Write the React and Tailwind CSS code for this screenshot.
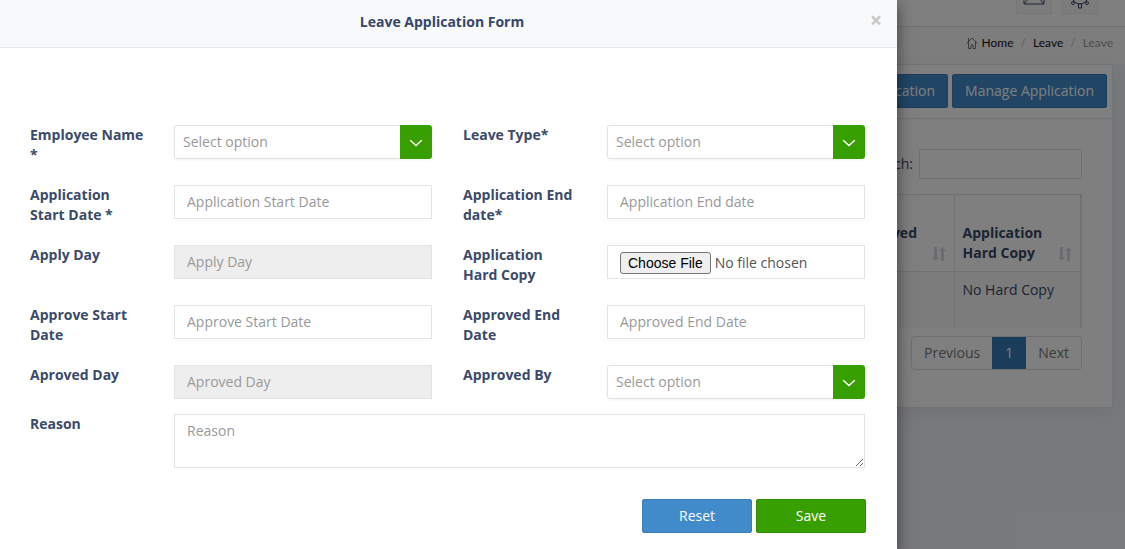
import { useState } from "react";

const fieldBox =
  "block w-full h-[34px] border border-[#e1e3e4] px-3 pb-[2px] text-[#555] outline-none placeholder:text-[#999] placeholder:opacity-100";

function Field({ id, label, children }) {
  return (
    <div className="grid grid-cols-[144px_1fr] items-start">
      <label htmlFor={id} className="pr-7 font-bold text-[#3b4a69]">
        {label}
      </label>
      {children}
    </div>
  );
}

function TextField({ id, label, placeholder, disabled }) {
  return (
    <Field id={id} label={label}>
      <input
        id={id}
        type="text"
        placeholder={placeholder}
        disabled={disabled}
        className={`${fieldBox} ${disabled ? "bg-[#eee]" : "bg-white"}`}
      />
    </Field>
  );
}

function SelectField({ id, label }) {
  return (
    <Field id={id} label={label}>
      <div className="relative">
        <select
          id={id}
          defaultValue=""
          className="block h-[34px] w-full appearance-none rounded-[3px] border border-[#e1e3e4] bg-white pl-2 pr-10 text-[#999] shadow-[0_1px_3px_rgba(0,0,0,0.06)] outline-none"
        >
          <option value="">Select option</option>
        </select>
        <span className="pointer-events-none absolute inset-y-0 right-0 flex w-8 items-center justify-center rounded-r-[3px] bg-[#37a000]">
          <svg width="14" height="8" viewBox="0 0 14 8" fill="none" stroke="#fff" strokeWidth="1.5" className="mt-px">
            <path d="M1.200 1.300 L7 6.500 L12.800 1.300" />
          </svg>
        </span>
      </div>
    </Field>
  );
}

function SortIcon() {
  return (
    <svg width="14" height="16" viewBox="0 0 14 16" fill="#d9d9e0" className="mb-px shrink-0">
      <path d="M2 1h3v10H7L3.500 15 0 11h2z" />
      <path d="M9 15h3V5H14L10.500 1 7 5h2z" />
    </svg>
  );
}

function IconBox({ label, children }) {
  return (
    <button type="button" aria-label={label} className="flex size-9 shrink-0 items-center justify-center border border-[#ededed] bg-[#f9f9f9] text-[#374767]">
      {children}
    </button>
  );
}

function Page() {
  return (
    <div className="min-h-screen bg-[#f1f3f6]">
      <header className="flex h-[27px] items-end justify-end gap-[10px] overflow-hidden border-b border-[#e1e3e4] bg-white pr-[27px] pb-3">
        <IconBox label="Messages">
          <svg width="26" height="26" viewBox="0 0 26 26" fill="none" stroke="currentColor">
            <path d="M3 4.500h20v16.500h-20z M3 5l10 9 10-9 M3.500 20.500l6.500-8 M22.500 20.500l-6.500-8" />
          </svg>
        </IconBox>
        <IconBox label="Settings">
          <svg width="26" height="26" viewBox="0 0 26 26" fill="none" stroke="currentColor">
            <circle cx="13" cy="13" r="8" />
            <path d="M11.500 21v4h3v-4 M11.500 5v-4h3v4 M21 14.500h4v-3h-4 M5 14.500h-4v-3h4" />
            <circle cx="6" cy="20" r="1.500" />
            <circle cx="20" cy="20" r="1.500" />
            <circle cx="6" cy="6" r="1.500" />
            <circle cx="20" cy="6" r="1.500" />
          </svg>
        </IconBox>
      </header>
      <nav className="flex h-[37px] items-center justify-end bg-[#fbfbfb] pr-3 pb-[6px] font-['Lato',sans-serif] text-[12px] text-[#111]">
        <svg width="12" height="12" viewBox="0 0 12 12" fill="none" stroke="#777" className="mr-1">
          <path d="M.5 6.500 6 1l5.500 5.500 M2.500 5v6.500h2.500V8h2v3.500h2.500V5 M2.500 4V1" />
        </svg>
        <a href="#home">Home</a>
        <span className="px-[7px] text-[#bbb]">/</span>
        <a href="#leave">Leave</a>
        <span className="px-[7px] text-[#bbb]">/</span>
        <span className="text-[#999]">Leave</span>
      </nav>
      <main className="mr-3 border border-[#e1e6ef] bg-white shadow-[0_5px_20px_rgba(69,65,78,0.08)]">
        <div className="flex justify-end gap-1 border-b border-[#e1e6ef] px-[5px] pt-[9px] pb-[10px] text-white">
          <button type="button" className="h-[34px] rounded-[2px] border border-[#3b7cb4] bg-[#428bca] px-3">Application</button>
          <button type="button" className="h-[34px] rounded-[2px] border border-[#3b7cb4] bg-[#428bca] px-3">Manage Application</button>
        </div>
        <div className="pr-[30px] pt-[30px] pb-[37px]">
          <div className="flex items-center justify-end gap-[6px]">
            <label htmlFor="search">Search:</label>
            <input id="search" type="search" className="h-[30px] w-[163px] border border-[#e1e3e4] bg-white px-2 outline-none" />
          </div>
          <div className="mt-[15px] h-[134px] overflow-hidden">
            <table className="ml-auto border-collapse border-r-2 border-[#e4e5e7] text-left">
              <thead>
                <tr className="h-[77px] align-bottom">
                  <th className="w-[127px] border border-[#e4e5e7] p-2">
                    <div className="flex items-end justify-between">
                      <span className="pl-[14px]">Approved<br />Day</span>
                      <SortIcon />
                    </div>
                  </th>
                  <th className="w-[127px] border border-[#e4e5e7] p-2">
                    <div className="flex items-end justify-between">Application Hard Copy<SortIcon /></div>
                  </th>
                </tr>
              </thead>
              <tbody>
                <tr className="h-[77px] bg-[#f9f9f9] align-top">
                  <td className="border border-[#e4e5e7] p-2" />
                  <td className="border border-[#e4e5e7] p-2">No Hard Copy</td>
                </tr>
              </tbody>
            </table>
          </div>
          <div className="mt-2 flex justify-end text-[#777]">
            <div className="flex h-[34px] overflow-hidden rounded border border-[#ddd]">
              <button type="button" className="px-3">Previous</button>
              <button type="button" className="-my-px w-[34px] bg-[#337ab7] text-white">1</button>
              <button type="button" className="px-3">Next</button>
            </div>
          </div>
        </div>
      </main>
    </div>
  );
}

function LeaveForm() {
  const [file, setFile] = useState("");
  return (
    <form className="pt-[77px] pr-8 pb-4 pl-[30px]" onSubmit={(e) => e.preventDefault()}>
      <div className="grid grid-cols-2 gap-x-[31px] gap-y-5">
        <SelectField id="employee" label="Employee Name *" />
        <SelectField id="type" label="Leave Type*" />
        <TextField id="start" label="Application Start Date *" placeholder="Application Start Date" />
        <TextField id="end" label="Application End date*" placeholder="Application End date" />
        <TextField id="apply-day" label="Apply Day" placeholder="Apply Day" disabled />
        <Field id="copy" label="Application Hard Copy">
          <input
            id="copy"
            type="file"
            value={file}
            onChange={() => setFile("")}
            className="block h-[34px] w-full border border-[#e1e3e4] px-3 py-[6px] text-[#555] file:mr-1 file:h-[22px] file:rounded-[3px] file:border file:border-solid file:border-[#767676] file:bg-[#efefef] file:px-[7px] file:font-['Liberation_Sans',sans-serif] file:text-[14px] file:leading-5 file:text-black"
          />
        </Field>
        <TextField id="approve-start" label="Approve Start Date" placeholder="Approve Start Date" />
        <TextField id="approve-end" label="Approved End Date" placeholder="Approved End Date" />
        <TextField id="approved-day" label="Aproved Day" placeholder="Aproved Day" disabled />
        <SelectField id="approved-by" label="Approved By" />
      </div>
      <div className="mt-[15px]">
        <Field id="reason" label="Reason">
          <textarea
            id="reason"
            placeholder="Reason"
            className="block h-[54px] w-full resize border border-[#e1e3e4] px-3 py-[6px] text-[#555] outline-none placeholder:text-[#999] placeholder:opacity-100"
          />
        </Field>
      </div>
      <div className="-mr-px mt-[31px] flex justify-end gap-1 text-white">
        <button type="reset" className="h-[34px] w-[110px] rounded-[2px] border border-[#3b7cb4] bg-[#428bca]">Reset</button>
        <button type="submit" className="h-[34px] w-[110px] rounded-[2px] border border-[#318d01] bg-[#37a000]">Save</button>
      </div>
    </form>
  );
}

export default function App() {
  return (
    <div className="relative overflow-hidden font-['Open_Sans',sans-serif] text-[14px] leading-5 text-[#374767]">
      <Page />
      <div className="absolute inset-0 bg-black/50">
        <section role="dialog" aria-labelledby="title" className="min-h-full w-full max-w-[897px] bg-white shadow-[0_5px_15px_rgba(0,0,0,0.5)]">
          <header className="flex h-12 items-center border-b border-[#e1e6ef] bg-[#f7f9fa] pr-[15px] pb-1 pl-[14px]">
            <h1 id="title" className="flex-1 text-center font-bold text-[#374767]">Leave Application Form</h1>
            <button type="button" aria-label="Close" className="pb-1 text-[21px] font-bold text-[#c6c7c8]">×</button>
          </header>
          <LeaveForm />
        </section>
      </div>
    </div>
  );
}
